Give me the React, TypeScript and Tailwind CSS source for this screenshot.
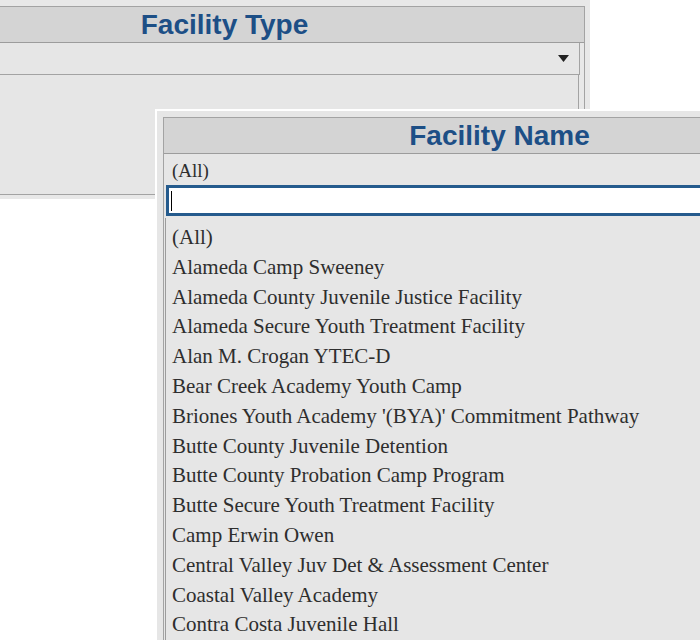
import React from "react";

const facilities = [
  "(All)",
  "Alameda Camp Sweeney",
  "Alameda County Juvenile Justice Facility",
  "Alameda Secure Youth Treatment Facility",
  "Alan M. Crogan YTEC-D",
  "Bear Creek Academy Youth Camp",
  "Briones Youth Academy '(BYA)' Commitment Pathway",
  "Butte County Juvenile Detention",
  "Butte County Probation Camp Program",
  "Butte Secure Youth Treatment Facility",
  "Camp Erwin Owen",
  "Central Valley Juv Det & Assessment Center",
  "Coastal Valley Academy",
  "Contra Costa Juvenile Hall",
];

function FilterHeader({ title }: { title: string }) {
  return (
    <div className="h-[36px] bg-[#d4d4d4] border-b border-[#9c9c9c] flex items-center justify-center">
      <span className="font-['Liberation_Sans',Arial,sans-serif] font-bold text-[28px] leading-none text-[#1d4f86]">
        {title}
      </span>
    </div>
  );
}

export default function App() {
  return (
    <div className="relative w-[700px] h-[640px] overflow-hidden bg-white">
      {/* Facility Type filter (behind) */}
      <div className="w-[590px] h-[199px] bg-[#e8e8e8] pt-[6px] overflow-hidden">
        <div className="-ml-[135px] w-[720px] border-t border-r border-[#a3a3a3]">
          <FilterHeader title="Facility Type" />
          <div className="mr-[4px] h-[32px] bg-[#e6e6e6] border-r border-b border-[#a3a3a3] flex items-center justify-end pr-[10px]">
            <svg width="11" height="7" viewBox="0 0 11 7">
              <path d="M0 0 H11 L5.5 7 Z" fill="#222" />
            </svg>
          </div>
          <div className="mr-[5px] h-[120px] border-r border-b border-[#a3a3a3] bg-[#e6e6e6]" />
        </div>
      </div>

      {/* Facility Name dropdown (open, on top) */}
      <div className="absolute left-[155px] top-[109px] w-[700px] h-[560px] border-l-2 border-t-2 border-white bg-[#e6e6e6] pl-[6px] pt-[6px]">
        <div className="w-[672px] h-full border-l border-t border-[#a3a3a3] flex flex-col">
          <FilterHeader title="Facility Name" />
          <div className="h-[31px] flex items-center pt-[3px] pl-[8px] font-['Liberation_Serif','Times_New_Roman',serif] text-[19px] text-[#2e2e2e]">
            (All)
          </div>
          <div className="ml-[2px] h-[31px] border-[3px] border-[#255b8d] bg-white flex items-center">
            <div className="ml-[2px] w-px h-[20px] bg-black" />
          </div>
          <div className="ml-[1px] mt-[2px] flex-1 border-l border-[#9c9c9c] pt-[5px] pl-[6px] font-['Liberation_Serif','Times_New_Roman',serif] text-[21px] leading-[29.8px] text-[#2e2e2e]">
            {facilities.map((f) => (
              <div key={f} className="whitespace-nowrap">
                {f}
              </div>
            ))}
          </div>
        </div>
      </div>
    </div>
  );
}
